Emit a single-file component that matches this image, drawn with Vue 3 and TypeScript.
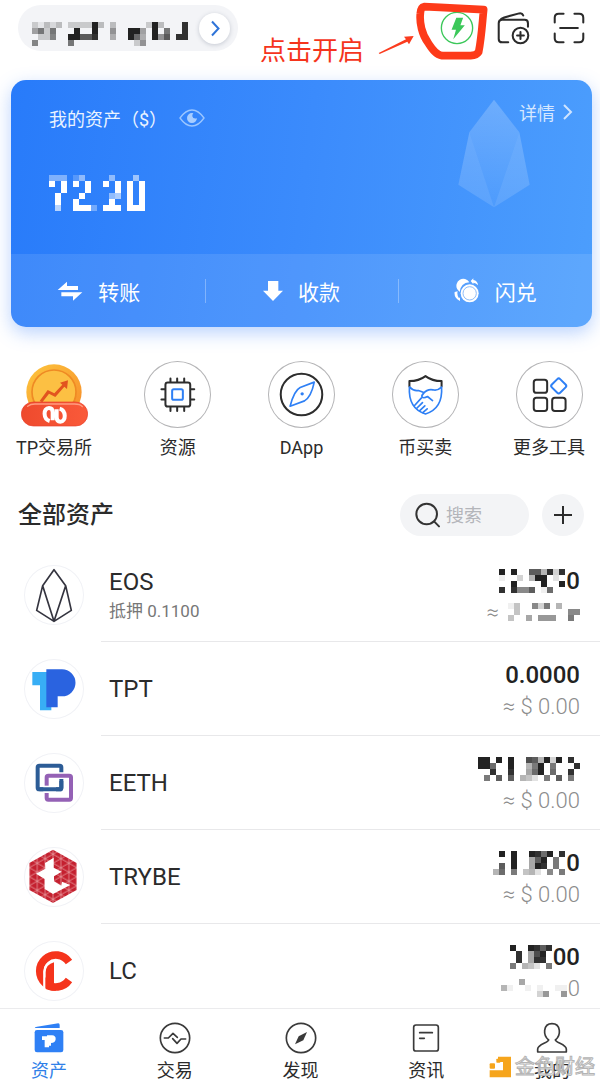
<script setup lang="ts">
import { defineComponent, h, ref } from 'vue'

// Draws a masked value as square cells. Each hex digit is the cell's ink strength.
const Mosaic = defineComponent({
  props: { rows: { type: Array as () => string[], required: true }, ink: { type: String, default: '#222' } },
  setup(props) {
    return () => {
      const cols = props.rows[0].length
      const cells = props.rows.flatMap((row, y) =>
        [...row].map((c, x) =>
          c === '.' ? null : h('rect', { x, y, width: 1, height: 1, 'fill-opacity': parseInt(c, 16) / 15 }),
        ),
      )
      return h(
        'svg',
        {
          width: cols * 6,
          height: props.rows.length * 6,
          viewBox: `0 0 ${cols} ${props.rows.length}`,
          fill: props.ink,
          'shape-rendering': 'crispEdges',
          'aria-hidden': 'true',
        },
        cells,
      )
    }
  },
})

interface Asset {
  id: string
  name: string
  note?: string
  amount: string
  amountMask?: string[]
  value: string
  valueMask?: string[]
}

const accountMask = [
  '31424.3333f4.4.....3f4...e',
  '6939...f..f..7..ff6.f.9..e',
  '.338..ffbbe..5..fa5.f7b.ee',
  '8.....9..........37.......',
]
const balanceMask = [
  '666.37....7...8.',
  'f.f.f.f..f.f.f.f',
  '..f...f....f.f.f',
  '.f...f....79.f.f',
  '.f..f.....f..f.f',
  '.a..fff5.fff.fff',
]

const assets: Asset[] = [
  {
    id: 'eos',
    name: 'EOS',
    note: '抵押 0.1100',
    amount: '0',
    amountMask: ['f.f..bb5e3e', '1..3.5ff.2.', '..f....f..f', 'e.e88b.1a..'],
    value: '≈',
    valueMask: ['14..839.5...', '.4........88', '4..6.777..9.'],
  },
  { id: 'tpt', name: 'TPT', amount: '0.0000', value: '≈ $ 0.00' },
  {
    id: 'eeth',
    name: 'EETH',
    amount: '',
    amountMask: ['ff.f.f..cb5f3f.e.', 'ffa..f..59f.9...e', '..e..e..6af.a..e.', '.9.b.b.542.9.b.9.'],
    value: '≈ $ 0.00',
  },
  {
    id: 'trybe',
    name: 'TRYBE',
    amount: '0',
    amountMask: ['.f.f..feaf.e', '...f..6bf.9.', '.b.f..6fe.9.', '5a.9.452.8.9'],
    value: '≈ $ 0.00',
  },
  {
    id: 'lc',
    name: 'LC',
    amount: '00',
    amountMask: ['f..febe', '.e.6cf.', '.e.6ee.', '9.542.9'],
    value: '0',
    valueMask: ['...6.......', '51..1.1..11', '......37..7'],
  },
]

const tools = [
  { id: 'exchange', label: 'TP交易所' },
  { id: 'chip', label: '资源' },
  { id: 'dapp', label: 'DApp' },
  { id: 'shield', label: '币买卖' },
  { id: 'more', label: '更多工具' },
]

const tabs = [
  { id: 'assets', label: '资产' },
  { id: 'trade', label: '交易' },
  { id: 'discover', label: '发现' },
  { id: 'news', label: '资讯' },
  { id: 'me', label: '我的' },
]
const activeTab = ref('assets')
const query = ref('')
</script>

<template>
  <div class="app">
    <header class="topbar">
      <button class="account" type="button" aria-label="切换账户">
        <Mosaic class="account-mask" :rows="accountMask" />
        <span class="account-go">
          <svg width="31" height="31" viewBox="0 0 31 31" fill="none" stroke="#2f74d8" stroke-width="2"><path d="M13 8.500l6.500 7-6.500 7" /></svg>
        </span>
      </button>
      <p class="hint">点击开启</p>
      <svg class="hint-arrow" width="36" height="20" viewBox="0 0 108 60" fill="#fb3b1e">
        <path d="M2 54 84 13 78 5 107 3 93 28 88 20 5 57Z" />
      </svg>
      <div class="top-actions">
        <button class="icon-btn" type="button" aria-label="节点">
          <svg width="34" height="34" viewBox="0 0 100 100">
            <circle cx="50" cy="50" r="46" fill="none" stroke="#3cc85a" stroke-width="4" />
            <path d="M48 20H68L60 42H73L39 83 47 55H34Z" fill="#3cc85a" />
          </svg>
          <svg class="scribble" width="72" height="58" viewBox="0 0 216 174" fill="none" stroke="#fd3a19" stroke-width="23" stroke-linejoin="round">
            <path d="M24 14 72 16 203 23C199 60 197 105 188 150Q182 160 164 161H78C58 158 48 140 36 122 18 98 10 62 13 34Q14 16 24 14Z" />
          </svg>
        </button>
        <button class="icon-btn" type="button" aria-label="添加钱包">
          <svg width="34" height="34" viewBox="0 0 100 100" fill="none" stroke="#2b2b2b" stroke-width="6" stroke-linecap="round" stroke-linejoin="round">
            <path d="M36 92H18Q8 92 8 82V36Q8 26 18 26H84Q94 26 94 36V46M11 29Q14 22 24 19L68 7Q77 5 80 13" />
            <circle cx="72" cy="72" r="23" /><path d="M72 62V82M62 72H82" />
          </svg>
        </button>
        <button class="icon-btn" type="button" aria-label="扫一扫">
          <svg width="34" height="34" viewBox="0 0 100 100" fill="none" stroke="#2b2b2b" stroke-width="6" stroke-linecap="round">
            <path d="M8 34V20Q8 8 20 8H34M66 8H80Q92 8 92 20V34M92 66V80Q92 92 80 92H66M34 92H20Q8 92 8 80V66M24 50H76" />
          </svg>
        </button>
      </div>
    </header>

    <main class="content">
      <section class="card">
        <svg class="card-art" width="72" height="109" viewBox="0 0 216 327">
          <defs>
            <linearGradient id="artGem" x1="0" y1="0" x2="0" y2="1">
              <stop offset="0" stop-color="#fff" stop-opacity=".22" /><stop offset="1" stop-color="#fff" stop-opacity=".04" />
            </linearGradient>
            <linearGradient id="artSide" x1="0" y1="0" x2="0" y2="1">
              <stop offset="0" stop-color="#fff" stop-opacity=".2" /><stop offset="1" stop-color="#fff" stop-opacity=".12" />
            </linearGradient>
          </defs>
          <path d="M108 2 184 100 108 325 34 100Z" fill="url(#artGem)" />
          <path d="M34 100 108 325 1 257ZM184 100 215 257 108 325Z" fill="url(#artSide)" />
        </svg>
        <div class="card-body">
          <div class="card-head">
            <span class="card-label">我的资产（$）</span>
            <button class="eye" type="button" aria-label="隐藏资产">
              <svg width="26" height="20" viewBox="0 0 78 60">
                <path d="M3 30Q20 6 39 6T75 30Q58 54 39 54T3 30Z" fill="none" stroke="#9bc6ff" stroke-width="4" />
                <path d="M39 15A15 15 0 1 0 54 31Q42 34 40 25 39 20 43 16Z" fill="#a9ceff" />
              </svg>
            </button>
            <a class="details" href="#details">详情
              <svg width="10" height="18" viewBox="0 0 10 18" fill="none" stroke="#cfe4ff" stroke-width="2"><path d="M1 2l7 7-7 7" /></svg>
            </a>
          </div>
          <Mosaic :rows="balanceMask" ink="#fff" />
        </div>
        <div class="card-actions">
          <button type="button">
            <svg width="26" height="20" viewBox="0 0 78 60" fill="#fff"><path d="M2 27 30 2V15H63V27ZM76 34 48 59V46H13V34Z" /></svg>转账
          </button>
          <button type="button">
            <svg width="20" height="20" viewBox="0 0 60 60" fill="#fff"><path d="M15 0H46V29H60L30 60 0 29H15Z" /></svg>收款
          </button>
          <button type="button">
            <svg width="26" height="26" viewBox="0 0 78 78">
              <path d="M50 9 58 1V6Q71 8 72 22 66 14 58 14V19ZM2 42 11 40Q8 51 15 61L18 58V69Q-1 60 2 42Z" fill="#fff" />
              <path d="M10 34A20 20 0 0 1 46 13Q20 15 17 42Z" fill="#fff" />
              <circle cx="47" cy="46" r="27" fill="#fff" /><circle cx="47" cy="46" r="20" fill="#fff" stroke="#8fbdf8" stroke-width="3" />
            </svg>闪兑
          </button>
        </div>
      </section>

      <nav class="tools" aria-label="工具">
        <a v-for="t in tools" :key="t.id" class="tool" :href="'#' + t.id">
          <svg v-if="t.id === 'exchange'" width="67" height="67" viewBox="0 0 201 201">
            <defs>
              <linearGradient id="coin" x1="0" y1="0" x2="1" y2="1"><stop offset="0" stop-color="#fdc63d" /><stop offset="1" stop-color="#f68a2a" /></linearGradient>
              <linearGradient id="bar" x1="0" y1="0" x2="1" y2="0"><stop offset="0" stop-color="#ee4a2d" /><stop offset="1" stop-color="#fa5a3a" /></linearGradient>
            </defs>
            <circle cx="99" cy="93" r="83" fill="url(#coin)" />
            <circle cx="99" cy="93" r="66" fill="#fcc043" stroke="#ef8a24" stroke-width="5" />
            <path d="M56 120 80 87 100 97 124 71 117 65 141 58 138 84 130 77 103 108 84 98 64 124Z" fill="#e2541f" />
            <rect x="1" y="123" width="199" height="72" rx="36" fill="url(#bar)" stroke="#e8402a" stroke-width="2" />
            <path d="M20 136Q28 129 42 129H160Q178 129 184 137" fill="none" stroke="#ff9c80" stroke-width="4" stroke-linecap="round" />
            <path d="M86 180C66 174 66 141 84 141Q95 141 95 154V178M116 143C136 149 136 182 118 182Q107 182 107 169V145" fill="none" stroke="#fff" stroke-width="12" />
          </svg>
          <span v-else class="tool-ring">
            <svg width="67" height="67" viewBox="0 0 200 200" fill="none" stroke="#2d2d2d" stroke-width="6" stroke-linecap="round" stroke-linejoin="round">
              <template v-if="t.id === 'chip'">
                <rect x="64" y="64" width="74" height="72" rx="7" />
                <path d="M79 52V62M99 52V62M120 52V62M79 138V149M99 138V149M120 138V149M52 84H62M52 115H62M140 84H150M140 115H150" />
                <rect x="84" y="84" width="32" height="32" rx="5" stroke="#2f80f5" />
              </template>
              <template v-else-if="t.id === 'dapp'">
                <circle cx="100" cy="100" r="62" />
                <path d="M66 135Q78 88 96 79L138 63Q129 107 109 119Z" stroke="#2f80f5" stroke-width="5" /><circle cx="102" cy="98" r="5" fill="#2f80f5" stroke="none" />
              </template>
              <template v-else-if="t.id === 'shield'">
                <path d="M52 76V60Q80 60 100 45 120 60 148 60V76" />
                <g stroke="#2f80f5" stroke-width="5">
                  <path d="M52 78Q48 142 100 158 152 142 148 78M53 78Q65 91 79 88L95 94M148 78Q135 90 122 86 105 83 94 97 87 103 90 108 95 112 106 106L121 118M68 132 88 110M74 141 91 124M82 149 98 134M91 155 105 143" />
                </g>
              </template>
              <template v-else>
                <rect x="53" y="56" width="40" height="39" rx="8" /><rect x="53" y="110" width="40" height="39" rx="8" /><rect x="108" y="110" width="40" height="39" rx="8" />
                <rect x="110" y="57" width="35" height="35" rx="6" stroke="#2f80f5" transform="rotate(45 127.500 74.500)" />
              </template>
            </svg>
          </span>
          <span>{{ t.label }}</span>
        </a>
      </nav>

      <section class="assets">
        <div class="assets-head">
          <h2>全部资产</h2>
          <label class="search">
            <svg width="26" height="26" viewBox="0 0 78 78" fill="none" stroke="#333" stroke-width="6" stroke-linecap="round"><circle cx="35" cy="36" r="31" /><path d="M58 59 72 73" /></svg>
            <input v-model="query" type="search" placeholder="搜索" aria-label="搜索" />
          </label>
          <button class="add" type="button" aria-label="添加资产">
            <svg width="18" height="18" viewBox="0 0 18 18" stroke="#2b2b2b" stroke-width="2"><path d="M9 0V18M0 9H18" /></svg>
          </button>
        </div>

        <ul class="list">
          <li v-for="a in assets" :key="a.id" class="row">
            <span class="logo">
              <svg width="60" height="60" viewBox="0 0 180 180">
                <path v-if="a.id === 'eos'" d="M90 14 56 62 38 136 90 169 142 136 125 62ZM56 62 90 169 125 62" fill="none" stroke="#34343f" stroke-width="5" stroke-linejoin="round" />
                <template v-else-if="a.id === 'tpt'">
                  <path d="M25 39H82V154H48V79H25Z" fill="#38aef5" />
                  <path d="M67 31H114A40 40 0 0 1 114 112H101V145H67Z" fill="#2a63e0" />
                </template>
                <g v-else-if="a.id === 'eeth'" fill="none" stroke-width="12">
                  <rect x="41" y="38" width="71" height="71" rx="5" stroke="#2c5c96" />
                  <path d="M68 96V68H141V140H68V120" stroke="#fff" stroke-width="20" /><rect x="68" y="68" width="73" height="72" rx="5" stroke="#9461b5" />
                  <path d="M58 109H96" stroke="#fff" stroke-width="22" /><path d="M46 109H107Q112 109 112 104V84" stroke="#2c5c96" />
                </g>
                <template v-else-if="a.id === 'trybe'">
                  <defs>
                    <pattern id="tri" width="47.400" height="27" patternUnits="userSpaceOnUse" x="16" y="8">
                      <rect width="48" height="27" fill="#c4202f" /><path d="M0 0V27M23.700 0V27M47.400 0V27M0 0 47.400 27M0 27 47.400 0" stroke="#f0b4b6" stroke-width="2" />
                    </pattern>
                  </defs>
                  <path d="M87 8 158 48V129L87 168 16 129V48Z" fill="url(#tri)" />
                  <path d="M63 48 89 32V62L113 74 90 88V103L112 116 114 104 139 114 87 141 62 126V96L36 80 64 65Z" fill="#fff" />
                </template>
                <template v-else>
                  <path d="M135 63A48 48 0 1 0 135 117" fill="none" stroke="#f5341c" stroke-width="23" />
                  <path d="M61 152V92Q61 68 92 60" fill="none" stroke="#fff" stroke-width="7" />
                  <path d="M65 144V94Q66 70 90 64V127L96 149Q78 150 65 144Z" fill="#f5341c" />
                </template>
              </svg>
            </span>
            <div class="row-main">
              <div class="coin">
                <span class="coin-name">{{ a.name }}</span>
                <span v-if="a.note" class="coin-note">{{ a.note }}</span>
              </div>
              <div class="figures">
                <span class="amount"><Mosaic v-if="a.amountMask" :rows="a.amountMask" />{{ a.amount }}</span>
                <span v-if="a.id === 'eos'" class="value">{{ a.value }}<Mosaic v-if="a.valueMask" class="value-mask" :rows="a.valueMask" /></span>
                <span v-else class="value"><Mosaic v-if="a.valueMask" :rows="a.valueMask" />{{ a.value }}</span>
              </div>
            </div>
          </li>
        </ul>
      </section>
    </main>

    <nav class="tabbar" aria-label="主导航">
      <a v-for="t in tabs" :key="t.id" class="tab" :class="{ active: activeTab === t.id }" :href="'#' + t.id" @click="activeTab = t.id">
        <svg width="32" height="32" viewBox="0 0 96 96" fill="none" stroke="#3a3a3a" stroke-width="5" stroke-linejoin="round" stroke-linecap="round">
          <template v-if="t.id === 'assets'">
            <path d="M5 19Q5 15 12 14L76 4Q80 4 80 9V18H5Z" fill="#2f80f5" stroke="none" />
            <rect x="5" y="24" width="86" height="67" rx="7" fill="#2f80f5" stroke="none" />
            <path d="M27 43H42V40H57Q69 41 68 52 67 63 54 63V71H48V76H35V54H27Z" fill="#fff" stroke="none" />
          </template>
          <template v-else-if="t.id === 'trade'"><circle cx="48" cy="48" r="44" /><path d="M16 48H28L42 34 55 46M41 50 54 64 66 51H80" /></template>
          <template v-else-if="t.id === 'discover'"><circle cx="48" cy="48" r="44" /><path d="M66 30 55 55 30 67 41 43Z" fill="#3a3a3a" stroke="none" /></template>
          <template v-else-if="t.id === 'news'"><rect x="11" y="9" width="74" height="78" rx="7" /><path d="M29 32H67M29 49H43" /></template>
          <path v-else d="M38 54C27 45 25 34 26 25 28 10 38 5 48 5S68 10 70 25C71 34 69 45 58 54 61 63 90 67 91 81V90H5V81C6 67 35 63 38 54Z" />
        </svg>
        <span>{{ t.label }}</span>
      </a>
      <div class="watermark" aria-hidden="true">
        <svg width="22" height="22" viewBox="0 0 66 66" fill="#f6a51c"><path d="M27 2H66V64H2V43H42V18H27Z" /><rect x="2" y="22" width="16" height="16" rx="3" /><rect x="22" y="8" width="12" height="12" rx="2" /></svg>
        <span>金色财经</span>
      </div>
    </nav>
  </div>
</template>

<style>
body {
  margin: 0;
  background: #fff;
}
</style>

<style scoped>
.app {
  display: flex;
  flex-direction: column;
  height: 100vh;
  overflow: hidden;
  color: #2b2b2b;
  font-family: Roboto, 'Noto Sans CJK SC', sans-serif;
  font-size: 18px;
}
svg {
  display: block;
  flex: none;
}
button {
  padding: 0;
  border: 0;
  background: none;
  color: inherit;
  font: inherit;
}
a {
  color: inherit;
  text-decoration: none;
}
.topbar {
  display: flex;
  align-items: flex-start;
  flex: none;
  box-sizing: border-box;
  height: 64px;
  padding: 5px 14px 0 18px;
}
.account {
  display: flex;
  align-items: center;
  gap: 11px;
  height: 46px;
  padding: 0 8px 0 14px;
  border-radius: 23px;
  background: #f3f4f7;
}
.account-mask {
  margin-top: 12px;
}
.account-go {
  border-radius: 50%;
  background: #fff;
  box-shadow: 0 1px 4px rgba(60, 70, 100, 0.25);
}
.hint {
  margin: 26px 14px 0 22px;
  color: #f5341c;
  font-size: 26px;
  line-height: 40px;
}
.hint-arrow {
  margin-top: 30px;
}
.top-actions {
  display: flex;
  gap: 22px;
  margin: 6px 0 0 auto;
}
.icon-btn {
  position: relative;
}
.scribble {
  position: absolute;
  top: -9px;
  left: -24px;
}
.content {
  flex: 1;
  min-height: 0;
  overflow: hidden;
  padding-top: 16px;
}
.card {
  position: relative;
  margin: 0 8px 0 11px;
  border-radius: 15px;
  background: linear-gradient(97deg, #287bfa, #3b8bfc 50%, #4c9efd);
  box-shadow: 0 6px 18px rgba(60, 130, 250, 0.35);
}
.card-art {
  position: absolute;
  top: 19px;
  right: 62px;
}
.card-body {
  padding: 20px 19px 43px 38px;
}
.card-head {
  display: flex;
  align-items: center;
  height: 36px;
  margin-bottom: 39px;
  color: #eaf3ff;
}
.eye {
  margin-left: 12px;
}
.details {
  display: flex;
  align-items: center;
  gap: 8px;
  margin: 0 0 12px auto;
  color: #d5e7ff;
}
.card-actions {
  display: grid;
  grid-template-columns: repeat(3, 1fr);
  height: 73px;
  border-radius: 0 0 15px 15px;
  background: rgba(255, 255, 255, 0.1);
  color: #fff;
  font-size: 21px;
}
.card-actions button {
  position: relative;
  display: flex;
  align-items: center;
  justify-content: center;
  gap: 15px;
}
.card-actions button:first-child {
  padding-right: 18px;
}
.card-actions button + button::before {
  content: '';
  position: absolute;
  left: 0;
  width: 1px;
  height: 24px;
  background: rgba(255, 255, 255, 0.3);
}
.tools {
  display: flex;
  justify-content: space-between;
  padding: 34px 12px 0 15px;
}
.tool {
  display: flex;
  flex-direction: column;
  align-items: center;
  gap: 8px;
  width: 78px;
  line-height: 24px;
  white-space: nowrap;
}
.tool-ring {
  border-radius: 50%;
  box-shadow: inset 0 0 0 1px #b4b4b6;
}
.assets-head {
  display: flex;
  align-items: center;
  gap: 13px;
  padding: 34px 16px 12px 18px;
}
h2 {
  flex: 1;
  margin: 0;
  font-size: 24px;
  font-weight: 500;
  line-height: 36px;
}
.search {
  display: flex;
  align-items: center;
  gap: 5px;
  width: 114px;
  height: 42px;
  padding-left: 15px;
  border-radius: 21px;
  background: #f3f4f6;
}
.search input {
  width: 70px;
  padding: 0;
  border: 0;
  outline: 0;
  background: none;
  font: inherit;
}
.search input::placeholder {
  color: #b3b5ba;
}
.add {
  display: grid;
  place-items: center;
  width: 42px;
  height: 42px;
  border-radius: 50%;
  background: #f3f4f6;
}
.list {
  margin: 0;
  padding: 0;
  list-style: none;
}
.row {
  display: flex;
  align-items: center;
  gap: 17px;
  height: 94px;
  padding-left: 24px;
}
.logo {
  border-radius: 50%;
  box-shadow: inset 0 0 0 1px #f1f2f6;
}
.row-main {
  display: flex;
  flex: 1;
  align-items: center;
  justify-content: space-between;
  box-sizing: border-box;
  height: 94px;
  padding: 0 20px 0 8px;
  border-bottom: 1px solid #e8e8ea;
}
.coin {
  display: flex;
  flex-direction: column;
}
.coin-name {
  font-size: 24px;
  line-height: 32px;
}
.coin-note {
  color: #777;
  font-size: 17px;
  line-height: 26px;
}
.figures {
  display: flex;
  flex-direction: column;
  align-items: flex-end;
  gap: 1px;
  margin-top: 4px;
}
.amount {
  display: flex;
  align-items: center;
  gap: 1px;
  height: 30px;
  color: #222;
  font-size: 24px;
  font-weight: 500;
}
.value {
  display: flex;
  align-items: center;
  gap: 1px;
  height: 30px;
  color: #8c8c8c;
  font-size: 22px;
  font-weight: 300;
}
.value-mask {
  margin-left: 8px;
}
.tabbar {
  position: relative;
  display: flex;
  flex: none;
  justify-content: space-between;
  padding: 13px 18px 0 19px;
  height: 60px;
  border-top: 1px solid #ebebed;
  background: #fff;
}
.tab {
  display: flex;
  flex-direction: column;
  align-items: center;
  gap: 4px;
  width: 60px;
  line-height: 26px;
}
.tab.active {
  color: #2f80e8;
}
.watermark {
  position: absolute;
  right: 5px;
  bottom: 0;
  display: flex;
  align-items: center;
  gap: 4px;
  color: rgba(255, 255, 255, 0.7);
  font-size: 20px;
  line-height: 30px;
  -webkit-text-stroke: 1px #b4b4b4;
}
</style>
